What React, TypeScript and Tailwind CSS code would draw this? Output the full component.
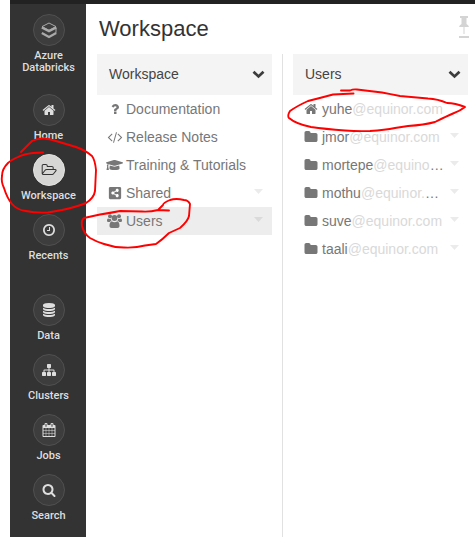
import React from "react";
import { FaGraduationCap, FaShareAltSquare } from "react-icons/fa";

const paths = {
  home: "M1472 992v480q0 26-19 45t-45 19h-384v-384h-256v384h-384q-26 0-45-19t-19-45v-480q0-1 .5-3t.5-3l575-474 575 474q1 2 1 6zm223-69l-62 74q-8 9-21 11h-3q-13 0-21-7l-692-577-692 577q-12 8-24 7-13-2-21-11l-62-74q-8-10-7-23.500t11-21.500l719-599q32-26 76-26t76 26l244 204v-195q0-14 9-23t23-9h192q14 0 23 9t9 23v408l219 182q10 8 11 21.500t-7 23.500z",
  folderOpen: "M1845 931q0-35-53-35h-1088q-40 0-85.500 21.500t-71.500 52.500l-294 363q-18 24-18 40 0 35 53 35h1088q40 0 86-22t71-53l294-363q18-22 18-39zm-1141-163h768v-160q0-40-28-68t-68-28h-576q-40 0-68-28t-28-68v-64q0-40-28-68t-68-28h-320q-40 0-68 28t-28 68v853l256-315q44-53 116-87.500t140-34.500zm1269 163q0 62-46 120l-295 363q-43 53-116 87.500t-140 34.500h-1088q-92 0-158-66t-66-158v-960q0-92 66-158t158-66h320q92 0 158 66t66 158v32h544q92 0 158 66t66 158v160h192q54 0 99 24.500t67 70.500q15 32 15 68z",
  clock: "M1024 544v448q0 14-9 23t-23 9h-320q-14 0-23-9t-9-23v-64q0-14 9-23t23-9h224v-352q0-14 9-23t23-9h64q14 0 23 9t9 23zm416 352q0-148-73-273t-198-198-273-73-273 73-198 198-73 273 73 273 198 198 273 73 273-73 198-198 73-273zm224 0q0 209-103 385.500t-279.500 279.500-385.500 103-385.500-103-279.500-279.500-103-385.500 103-385.500 279.500-279.500 385.500-103 385.500 103 279.500 279.500 103 385.500z",
  database: "M896 768q237 0 443-43t325-127v170q0 69-103 128t-280 93.500-385 34.500-385-34.500-280-93.500-103-128v-170q119 84 325 127t443 43zm0 768q237 0 443-43t325-127v170q0 69-103 128t-280 93.500-385 34.500-385-34.500-280-93.500-103-128v-170q119 84 325 127t443 43zm0-384q237 0 443-43t325-127v170q0 69-103 128t-280 93.500-385 34.500-385-34.500-280-93.500-103-128v-170q119 84 325 127t443 43zm0-1152q208 0 385 34.500t280 93.500 103 128v128q0 69-103 128t-280 93.500-385 34.500-385-34.500-280-93.500-103-128v-128q0-69 103-128t280-93.500 385-34.500z",
  sitemap: "M1792 1248v320q0 40-28 68t-68 28h-320q-40 0-68-28t-28-68v-320q0-40 28-68t68-28h96v-192h-512v192h96q40 0 68 28t28 68v320q0 40-28 68t-68 28h-320q-40 0-68-28t-28-68v-320q0-40 28-68t68-28h96v-192h-512v192h96q40 0 68 28t28 68v320q0 40-28 68t-68 28h-320q-40 0-68-28t-28-68v-320q0-40 28-68t68-28h96v-192q0-52 38-90t90-38h512v-192h-96q-40 0-68-28t-28-68v-320q0-40 28-68t68-28h320q40 0 68 28t28 68v320q0 40-28 68t-68 28h-96v192h512q52 0 90 38t38 90v192h96q40 0 68 28t28 68z",
  calendar: "M192 1664h288v-288h-288v288zm352 0h320v-288h-320v288zm-352-352h288v-320h-288v320zm352 0h320v-320h-320v320zm-352-384h288v-288h-288v288zm736 736h320v-288h-320v288zm-384-736h320v-288h-320v288zm768 736h288v-288h-288v288zm-384-352h320v-320h-320v320zm-352-864v-288q0-13-9.500-22.500t-22.500-9.500h-64q-13 0-22.500 9.500t-9.500 22.500v288q0 13 9.500 22.500t22.500 9.500h64q13 0 22.500-9.500t9.500-22.500zm736 864h288v-320h-288v320zm-384-384h320v-288h-320v288zm384 0h288v-288h-288v288zm32-480v-288q0-13-9.500-22.500t-22.500-9.500h-64q-13 0-22.500 9.500t-9.500 22.500v288q0 13 9.500 22.500t22.500 9.500h64q13 0 22.500-9.500t9.500-22.500zm384-64v1280q0 52-38 90t-90 38h-1408q-52 0-90-38t-38-90v-1280q0-52 38-90t90-38h128v-96q0-66 47-113t113-47h64q66 0 113 47t47 113v96h384v-96q0-66 47-113t113-47h64q66 0 113 47t47 113v96h128q52 0 90 38t38 90z",
  search: "M1216 832q0-185-131.500-316.500t-316.500-131.500-316.500 131.500-131.500 316.500 131.500 316.500 316.500 131.500 316.500-131.500 131.500-316.500zm512 832q0 52-38 90t-90 38q-54 0-90-38l-343-342q-179 124-399 124-143 0-273.500-55.500t-225-150-150-225-55.500-273.500 55.500-273.500 150-225 225-150 273.500-55.500 273.500 55.500 225 150 150 225 55.500 273.500q0 220-124 399l343 343q37 37 37 90z",
  code: "M553 1399l-50 50q-10 10-23 10t-23-10l-466-466q-10-10-10-23t10-23l466-466q10-10 23-10t23 10l50 50q10 10 10 23t-10 23l-393 393 393 393q10 10 10 23t-10 23zm591-1067l-373 1291q-4 13-15.500 19.500t-23.500 2.500l-62-17q-13-4-19.500-15.500t-2.500-24.500l373-1291q4-13 15.500-19.500t23.500-2.500l62 17q13 4 19.500 15.500t2.500 24.500zm657 651l-466 466q-10 10-23 10t-23-10l-50-50q-10-10-10-23t10-23l393-393-393-393q-10-10-10-23t10-23l50-50q10-10 23-10t23 10l466 466q10 10 10 23t-10 23z",
  folder: "M1728 608v704q0 92-66 158t-158 66h-1216q-92 0-158-66t-66-158v-960q0-92 66-158t158-66h320q92 0 158 66t66 158v32h672q92 0 158 66t66 158z",
  question: "M1088 1256v240q0 16-12 28t-28 12h-240q-16 0-28-12t-12-28v-240q0-16 12-28t28-12h240q16 0 28 12t12 28zm316-600q0 54-15.500 101t-35 76.500-55 59.500-57.500 43.500-61 35.500q-41 23-68.500 65t-27.500 67q0 17-12 32.500t-28 15.500h-240q-15 0-25.500-18.500t-10.500-37.500v-45q0-83 65-156.500t143-108.500q59-27 84-56t25-76q0-42-46.500-74t-107.500-32q-65 0-108 29-35 25-107 115-13 16-31 16-12 0-25-8l-164-125q-13-10-15.500-25t5.500-28q160-266 464-266 80 0 161 31t146 83 106 127.500 41 158.500z",
};

function Icon({ name, className = "size-[14px]" }: { name: keyof typeof paths; className?: string }) {
  const box = name === "folderOpen" ? "0 0 2000 1792" : "0 0 1792 1792";
  return (
    <svg viewBox={box} className={`${className} overflow-visible`} fill="currentColor">
      <path d={paths[name]} />
    </svg>
  );
}

function Layers() {
  return (
    <svg viewBox="0 0 16 17" className="h-[17px] w-4" fill="none" stroke="#aaa">
      <path d="M8 1 1 4.600 8 8.200 15 4.600z" strokeWidth="1" />
      <path d="M.8 5.500 8 9.200l7.200-3.700M.8 11 8 14.900l7.200-3.900" strokeWidth="2.300" />
      <path d="M15 5.500v5.300" strokeWidth="1" />
    </svg>
  );
}

function People() {
  return (
    <svg viewBox="0 0 15 14" className="h-[14px] w-[15px]" fill="currentColor">
      <circle cx="3" cy="2.200" r="2" />
      <circle cx="12" cy="2.200" r="2" />
      <circle cx="7.500" cy="4" r="2.900" />
      <path d="M4.700 7.300C3 8 2.500 9.800 2.500 11.800 2.500 13.200 3.300 14 4.600 14h5.800c1.300 0 2.100-.8 2.100-2.200 0-2-.5-3.800-2.200-4.500-.8.600-1.700 1-2.800 1s-2-.4-2.800-1z" />
      <path d="M1.100 4.500C.3 4.500 0 5.500 0 6.800 0 7.700.7 8 1.500 8h1.300c.4-.6 1-1 1.700-1.200-.5-.6-.7-1.400-.6-2.100-1 .4-1.900.3-2.800-.2zM13.900 4.500c.8 0 1.100 1 1.100 2.300 0 .9-.7 1.200-1.500 1.200h-1.300c-.4-.6-1-1-1.700-1.200.5-.6.7-1.400.6-2.100 1 .4 1.900.3 2.800-.2z" />
    </svg>
  );
}

function NavItem({ label, icon, active, tall }: { label: string; icon: React.ReactNode; active?: boolean; tall?: boolean }) {
  return (
    <div className={`flex flex-col items-center ${tall ? "h-20" : "h-[60px]"}`}>
      <div
        className={`flex size-8 shrink-0 items-center justify-center rounded-full border ${
          active ? "border-[#e4e4e2] bg-[#d6d6d4] text-[#333]" : "border-[#505050] bg-[#3d3d3d] text-[#dedede]"
        }`}
      >
        {icon}
      </div>
      <div className="mt-1 w-[60px] text-center font-[Roboto,sans-serif] text-[11px] leading-3 font-medium text-[#dedede]">{label}</div>
    </div>
  );
}

function ColumnHeader({ title }: { title: string }) {
  return (
    <div className="flex h-[41px] items-center justify-between bg-[#f4f4f4] pr-[7px] pl-3 text-[#444]">
      <span className="-mt-0.5">{title}</span>
      <svg viewBox="0 0 13 9" className="h-[9px] w-[13px]" fill="none" stroke="#3c3c3c" strokeWidth="2.700">
        <path d="M1.500 1.700 6.500 6.500l5-4.800" />
      </svg>
    </div>
  );
}

function Row({ icon, children, caret, selected }: { icon: React.ReactNode; children: React.ReactNode; caret?: boolean; selected?: boolean }) {
  return (
    <div className={`flex h-7 items-center pr-[9px] pl-[9px] ${selected ? "bg-[#ededed]" : ""}`}>
      <span className="flex w-[17px] shrink-0 items-center justify-center text-[#777]">{icon}</span>
      <span className="ml-[3px] grow whitespace-nowrap text-[#777]">{children}</span>
      {caret && (
        <svg viewBox="0 0 9 5" className={`mb-[3px] h-[5px] w-[9px] ${selected ? "text-[#dadada]" : "text-[#ebebeb]"}`} fill="currentColor">
          <path d="M0 0h9L4.500 5z" />
        </svg>
      )}
    </div>
  );
}

const users = [
  ["jmor", "@equinor.com", ""],
  ["mortepe", "@equino", "…"],
  ["mothu", "@equinor.", "…"],
  ["suve", "@equinor.com", ""],
  ["taali", "@equinor.com", ""],
];

export default function App() {
  return (
    <div className="relative h-[537px] w-[475px] overflow-hidden bg-white pl-[10px] font-['Liberation_Sans',Arial,sans-serif] text-[14px] leading-5">
      <div className="h-1 bg-[#222]" />
      <div className="flex h-[533px]">
        <nav className="w-[76px] shrink-0 bg-[#333] pt-[10px] pl-px">
          <NavItem label="Azure Databricks" icon={<Layers />} tall />
          <NavItem label="Home" icon={<Icon name="home" />} />
          <NavItem label="Workspace" icon={<Icon name="folderOpen" className="h-[14px] w-4" />} active />
          <NavItem label="Recents" icon={<Icon name="clock" />} tall />
          <NavItem label="Data" icon={<Icon name="database" />} />
          <NavItem label="Clusters" icon={<Icon name="sitemap" />} />
          <NavItem label="Jobs" icon={<Icon name="calendar" />} />
          <NavItem label="Search" icon={<Icon name="search" />} />
        </nav>
        <main className="flex grow flex-col">
          <header className="flex h-[50px] items-start justify-between pr-[5px] pl-[13px]">
            <h1 className="mt-3 text-[22px] leading-[25px] text-[#333]">Workspace</h1>
            <svg viewBox="0 0 12 22" className="mt-3 h-[22px] w-3" fill="#d4d4d4">
              <path d="M2 0h8v2H8.500v6q2 .8 2.500 3H1q.5-2.200 2.500-3V2H2zM5.500 11h1v7h-1zM1 20h10v2H1z" />
            </svg>
          </header>
          <div className="flex grow">
            <section className="w-[197px] border-r border-[#e1e1e1] pr-[10px] pl-[11px]">
              <ColumnHeader title="Workspace" />
              <Row icon={<Icon name="question" />}>Documentation</Row>
              <Row icon={<Icon name="code" />}>Release Notes</Row>
              <Row icon={<FaGraduationCap className="h-[14px] w-[17px]" />}>Training &amp; Tutorials</Row>
              <Row icon={<FaShareAltSquare className="size-[14px]" />} caret>Shared</Row>
              <Row icon={<People />} caret selected>Users</Row>
            </section>
            <section className="w-[185px] pl-[10px]">
              <ColumnHeader title="Users" />
              <Row icon={<Icon name="home" />}>
                yuhe<span className="text-[#d9d9d9]">@equinor.com</span>
              </Row>
              {users.map(([name, domain, rest]) => (
                <Row key={name} icon={<Icon name="folder" />} caret>
                  {name}
                  <span className="text-[#d9d9d9]">{domain}</span>
                  {rest}
                </Row>
              ))}
            </section>
          </div>
        </main>
      </div>
      <svg viewBox="0 0 475 537" className="pointer-events-none absolute inset-0 h-[537px] w-[475px]" fill="none" stroke="#f00" strokeWidth="1.900" strokeLinecap="round" strokeLinejoin="round">
        <path d="M43 152.500 33 153Q24 154 18 157Q11 160 8 163Q2 169 2 176Q1 182 4 188Q7 198 12 204Q17 210 26 211Q35 213 48 212.500L62 210Q76 207 86 203Q94 198 95 191L96 170Q95 160 92 156Q85 150 76 147Q66 144 56 141Q48 138 42 138.500Q36 139 32 141L21 152" />
        <path d="M169 210.500 158 210Q150 212 142 211.500L120 211Q110 213 100 214.500L84 218Q81 220 82 226Q84 234 90 238Q97 242 104 244Q114 247.500 124 247.500Q136 248 145 245.500L156 244Q163 239 169 233L180 228Q188 221 189 216L190 204Q188 200 184 200Q176 198 170 200Q163 203 163 205L158 210" />
        <path d="M353.500 93.500 333 94.500Q320 98 308 101Q297 106 290 111Q287 116 289 118Q296 124 311 127Q325 129 345 130.500Q358 131.500 370 131Q385 130 395 128L408 126Q424 125 435 122Q447 116 453 113.500Q460 111 465 107Q455 103 447 103Q438 99 428 98.500L400 96Q390 94 382 92.500L357 89.500Q353 89 350 90.500L341 90.500" />
      </svg>
    </div>
  );
}
